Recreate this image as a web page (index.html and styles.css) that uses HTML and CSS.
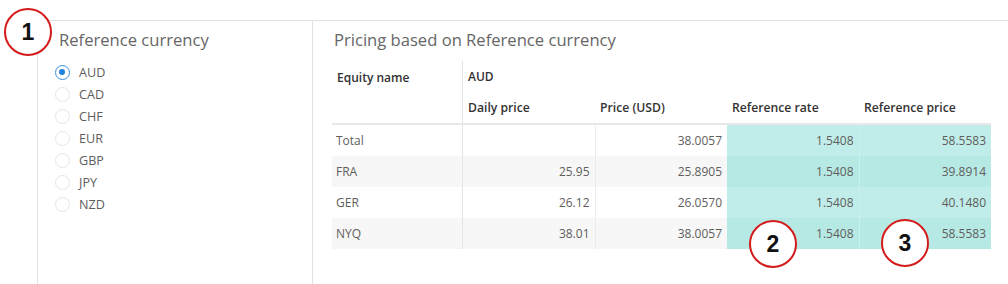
FILE: index.html
```html
<!DOCTYPE html>
<html>
<head>
<meta charset="utf-8">
<link rel="stylesheet" href="styles.css">
</head>
<body>
<div class="page">
  <section class="slicer">
    <h2 class="title">Reference currency</h2>
    <ul class="options">
      <li class="opt selected"><span class="radio"></span>AUD</li>
      <li class="opt"><span class="radio"></span>CAD</li>
      <li class="opt"><span class="radio"></span>CHF</li>
      <li class="opt"><span class="radio"></span>EUR</li>
      <li class="opt"><span class="radio"></span>GBP</li>
      <li class="opt"><span class="radio"></span>JPY</li>
      <li class="opt"><span class="radio"></span>NZD</li>
    </ul>
  </section>
  <section class="matrix">
    <h2 class="title">Pricing based on Reference currency</h2>
    <table class="grid">
      <thead>
        <tr class="h1">
          <th class="c-name" rowspan="2">Equity name</th>
          <th class="c-grp" colspan="4">AUD</th>
        </tr>
        <tr class="h2">
          <th class="sep">Daily price</th>
          <th>Price (USD)</th>
          <th>Reference rate</th>
          <th>Reference price</th>
        </tr>
      </thead>
      <tbody>
        <tr>
          <td class="c-name">Total</td>
          <td class="num sep"></td>
          <td class="num sep2">38.0057</td>
          <td class="num hl">1.5408</td>
          <td class="num hl hl2">58.5583</td>
        </tr>
        <tr class="alt">
          <td class="c-name">FRA</td>
          <td class="num sep">25.95</td>
          <td class="num sep2">25.8905</td>
          <td class="num hl">1.5408</td>
          <td class="num hl hl2">39.8914</td>
        </tr>
        <tr>
          <td class="c-name">GER</td>
          <td class="num sep">26.12</td>
          <td class="num sep2">26.0570</td>
          <td class="num hl">1.5408</td>
          <td class="num hl hl2">40.1480</td>
        </tr>
        <tr class="alt">
          <td class="c-name">NYQ</td>
          <td class="num sep">38.01</td>
          <td class="num sep2">38.0057</td>
          <td class="num hl">1.5408</td>
          <td class="num hl hl2">58.5583</td>
        </tr>
      </tbody>
    </table>
  </section>
</div>
<span class="badge b1">1</span>
<span class="badge b2">2</span>
<span class="badge b3">3</span>
</body>
</html>
```
FILE: styles.css
```css
html, body {
  margin: 0;
  padding: 0;
  background: #ffffff;
}
body {
  width: 1008px;
  height: 284px;
  overflow: hidden;
  position: relative;
  font-family: "Open Sans", "Noto Sans", sans-serif;
}
.page {
  display: flex;
  padding: 20px 0 0 37px;
  height: 264px;
}
.slicer {
  width: 275px;
  border-left: 1px solid #e1e1e1;
  border-top: 1px solid #e1e1e1;
  padding: 7px 0 0 21px;
  box-sizing: border-box;
}
.matrix {
  flex: 1;
  border-left: 1px solid #e1e1e1;
  border-top: 1px solid #e1e1e1;
  padding: 7px 0 0 19px;
}
.title {
  margin: 0;
  font-size: 16.6px;
  font-weight: 400;
  line-height: 24px;
  color: #666666;
}
.matrix .title {
  padding-left: 2px;
}
.options {
  list-style: none;
  margin: 9px 0 0 0;
  padding: 0;
}
.opt {
  display: flex;
  align-items: center;
  height: 22px;
  font-size: 12.6px;
  color: #605e5c;
}
.radio {
  width: 15px;
  height: 15px;
  border-radius: 50%;
  border: 1px solid #e6e6e6;
  margin: 0 9px 0 -4px;
  box-sizing: border-box;
  position: relative;
  background: #fff;
}
.selected .radio {
  border: 1.5px solid #3b8fe0;
}
.selected .radio::after {
  content: "";
  position: absolute;
  left: 3px;
  top: 3px;
  width: 6px;
  height: 6px;
  border-radius: 50%;
  background: #1f7fdb;
}
.grid {
  border-collapse: collapse;
  margin-top: 9px;
  font-size: 12px;
  color: #605e5c;
}
.grid th {
  font-weight: 600;
  color: #333333;
  text-align: left;
  padding: 0 5px;
  vertical-align: middle;
}
.h1 th, .h2 th {
  height: 31px;
}
.h2 th {
  border-bottom: 2px solid #e8e8e8;
}
.grid th.c-name {
  vertical-align: top;
  padding-top: 8px;
  border-bottom: 2px solid #e8e8e8;
}
.c-name {
  width: 120px;
  padding: 0 4px;
}
.c-grp {
  border-left: 1px solid #e4e4e4;
}
.h2 th.sep {
  border-left: 1px solid #e4e4e4;
}
.h2 th {
  width: 122px;
  font-size: 12.2px;
}
.grid td {
  height: 31px;
  padding: 0 5px;
}
.grid td.c-name {
  padding: 0 4px;
}
.num {
  text-align: right;
}
td.sep {
  border-left: 1px solid #e4e4e4;
}
td.sep2 {
  border-left: 1px solid #ececec;
}
tr.alt td {
  background: #f7f7f7;
}
td.hl {
  background: #c0ede9;
}
tr.alt td.hl {
  background: #b7e9e4;
}
td.hl2 {
  border-left: 1px solid #c9f0ec;
}
.badge {
  position: absolute;
  width: 44px;
  height: 44px;
  border: 2px solid #d41b1b;
  border-radius: 50%;
  background: #ffffff;
  display: flex;
  align-items: center;
  justify-content: center;
  font-family: "Liberation Sans", Arial, sans-serif;
  font-weight: 700;
  font-size: 23px;
  color: #111111;
}
.b1 { left: 4px; top: 8px; }
.b2 { left: 749px; top: 220px; }
.b3 { left: 881px; top: 219px; }
```
